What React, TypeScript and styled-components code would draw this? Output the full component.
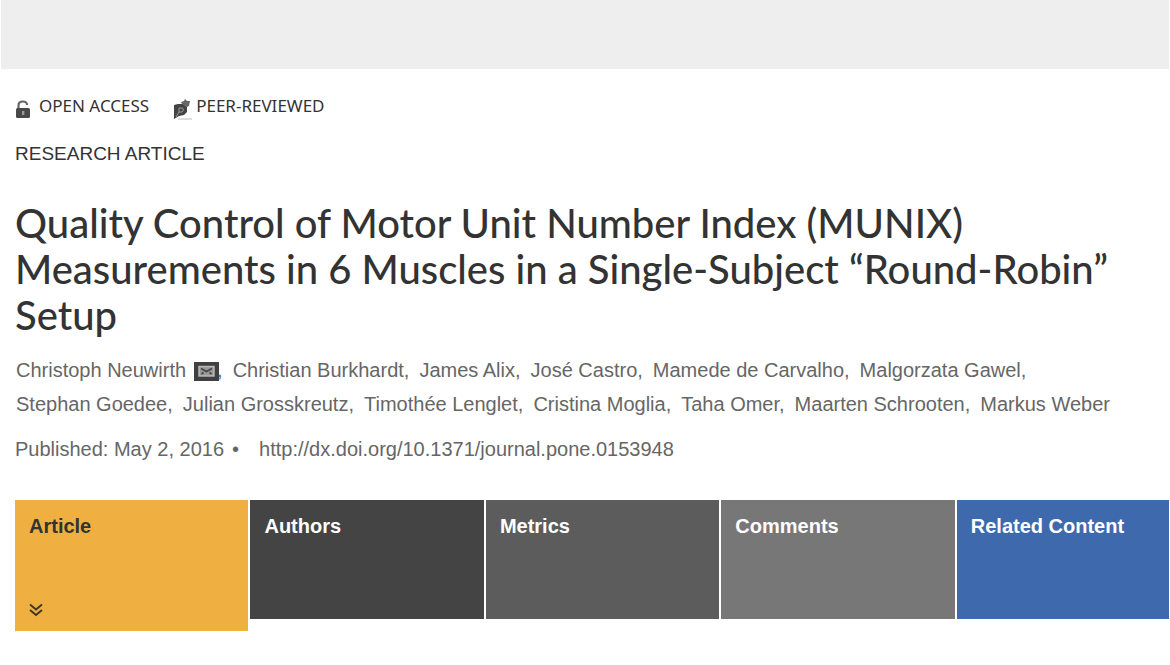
import React from "react";
import styled, { createGlobalStyle } from "styled-components";

const GlobalStyle = createGlobalStyle`
  * { box-sizing: border-box; }
  body {
    margin: 0;
    background: #fff;
    color: #333;
    font-family: "Liberation Sans", Arial, sans-serif;
    font-size: 20px;
  }
`;

const Page = styled.div`
  padding: 0 1px;
`;

const AdBanner = styled.div`
  height: 69px;
  background: #eee;
`;

const Article = styled.main`
  padding: 23px 0 32px 14px;
`;

const Badges = styled.ul`
  display: flex;
  gap: 24px;
  margin: 0;
  padding: 0;
  list-style: none;
  font-family: "Noto Sans", sans-serif;
  font-size: 17px;
  line-height: 26px;
`;

const Badge = styled.li<{ $gap: number }>`
  display: flex;
  align-items: center;
  gap: ${(p) => p.$gap}px;

  svg {
    flex: none;
    margin-top: 7px;
  }
`;

const ArticleType = styled.p`
  margin: 22px 0 0;
  font-size: 19px;
  line-height: 24px;
`;

const Title = styled.h1`
  margin: 34px 0 0;
  color: #333;
  font-family: Lato, "Noto Sans", sans-serif;
  font-size: 40px;
  font-weight: 500;
  line-height: 46px;
`;

const Authors = styled.ul`
  margin: 15px 0 0;
  padding: 0 0 0 1px;
  list-style: none;
  color: #666;
  line-height: 34px;
`;

const Author = styled.li`
  display: inline-block;
  margin-right: 10px;
  white-space: nowrap;
`;

const MailButton = styled.button`
  margin: 0 -2px 0 8px;
  padding: 0;
  border: 0;
  background: none;
  vertical-align: -4px;
  line-height: 0;
  cursor: pointer;
`;

const PublishInfo = styled.p`
  display: flex;
  margin: 14px 0 0;
  color: #666;
  line-height: 28px;
`;

const Bullet = styled.span`
  margin: 0 20px 0 8px;
`;

const Doi = styled.a`
  color: inherit;
  text-decoration: none;
`;

const Tabs = styled.nav`
  display: grid;
  grid-template-columns: repeat(4, 11fr) 10fr;
  align-items: start;
  gap: 2px;
  margin-top: 37px;
`;

const Tab = styled.a<{ $bg: string; $active?: boolean }>`
  display: flex;
  flex-direction: column;
  justify-content: space-between;
  height: ${(p) => (p.$active ? 131 : 119)}px;
  padding: 14px;
  background: ${(p) => p.$bg};
  color: ${(p) => (p.$active ? "#333" : "#fff")};
  font-weight: 700;
  line-height: 24px;
  text-decoration: none;
`;

const OpenLock = () => (
  <svg width="16" height="19" viewBox="0 0 16 19" aria-hidden="true">
    <path d="M3.5 9V5.5C3.5 2.8 5 1.5 7.7 1.5S12 2.8 12 5" fill="none" stroke="#666" strokeWidth="2.2" />
    <rect x="1" y="8" width="14" height="10" rx="1.5" fill="#484848" />
    <path d="M7 11h2.4v4H7z" fill="#999" />
  </svg>
);

const PeerReviewed = () => (
  <svg width="19" height="21" viewBox="0 0 19 21" aria-hidden="true">
    <path d="M1 6l4-1h5l4 3v5l-3 3-5 1-5 3z" fill="#444" />
    <path d="M8 3l3-1 1-2 2 2h3l-1 5-2 1-5-3z" fill="#666" />
    <path d="M3 18l3-5V9h3.500l1 2-1.500 2H6" fill="none" stroke="#999" strokeWidth="1" />
    <path d="M5 20h14" stroke="#bbb" strokeWidth="1" />
  </svg>
);

const Envelope = () => (
  <svg width="25" height="19" viewBox="0 0 25 19" aria-hidden="true">
    <rect width="25" height="19" fill="#404040" />
    <rect x="5" y="4.5" width="15" height="9.5" fill="#999" stroke="#bbb" strokeWidth="1.4" />
    <path d="M7 6.500l5.500 3L18 6.500M7.500 12l2-1.500M17.500 12l-2-1.500" fill="none" stroke="#444" strokeWidth="1.6" />
  </svg>
);

const DoubleChevron = () => (
  <svg width="14" height="14" viewBox="0 0 14 14" aria-hidden="true">
    <path d="M1 1.5l6 5 6-5M1 7l6 5 6-5" fill="none" stroke="#40372a" strokeWidth="2" />
  </svg>
);

const authors = [
  "Christoph Neuwirth",
  "Christian Burkhardt",
  "James Alix",
  "José Castro",
  "Mamede de Carvalho",
  "Malgorzata Gawel",
  "Stephan Goedee",
  "Julian Grosskreutz",
  "Timothée Lenglet",
  "Cristina Moglia",
  "Taha Omer",
  "Maarten Schrooten",
  "Markus Weber",
];

const tabs = [
  { label: "Article", bg: "#f0b041", active: true },
  { label: "Authors", bg: "#444" },
  { label: "Metrics", bg: "#5c5c5c" },
  { label: "Comments", bg: "#777" },
  { label: "Related Content", bg: "#3e69ad" },
];

export default function App() {
  return (
    <>
      <GlobalStyle />
      <Page>
        <AdBanner />
        <Article>
          <Badges>
            <Badge $gap={8}>
              <OpenLock />
              OPEN ACCESS
            </Badge>
            <Badge $gap={4}>
              <PeerReviewed />
              PEER-REVIEWED
            </Badge>
          </Badges>
          <ArticleType>RESEARCH ARTICLE</ArticleType>
          <Title>
            Quality Control of Motor Unit Number Index (MUNIX)
            <br />
            Measurements in 6 Muscles in a Single-Subject “Round-Robin”
            <br />
            Setup
          </Title>
          <Authors>
            {authors.map((name, i) => (
              <Author key={name}>
                {name}
                {i === 0 && (
                  <MailButton type="button" aria-label="Email author">
                    <Envelope />
                  </MailButton>
                )}
                {i < authors.length - 1 && ","}
              </Author>
            ))}
          </Authors>
          <PublishInfo>
            Published: May 2, 2016
            <Bullet>•</Bullet>
            <Doi href="http://dx.doi.org/10.1371/journal.pone.0153948">
              http://dx.doi.org/10.1371/journal.pone.0153948
            </Doi>
          </PublishInfo>
          <Tabs>
            {tabs.map((t) => (
              <Tab key={t.label} href="#" $bg={t.bg} $active={t.active}>
                {t.label}
                {t.active && <DoubleChevron />}
              </Tab>
            ))}
          </Tabs>
        </Article>
      </Page>
    </>
  );
}
